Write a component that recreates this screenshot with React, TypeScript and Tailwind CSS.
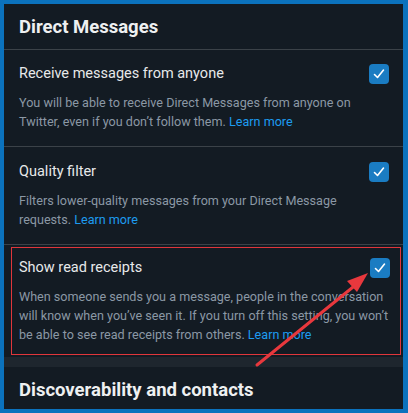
import React from "react";

function Check() {
  return (
    <div className="w-[20px] h-[20px] rounded-[4px] bg-[#1a7cc2] flex items-center justify-center shrink-0">
      <svg width="14" height="14" viewBox="0 0 14 14" fill="none">
        <path d="M2.5 7.5 L5.5 10.5 L11.5 3" stroke="white" strokeWidth="1.6" strokeLinecap="round" strokeLinejoin="round" />
      </svg>
    </div>
  );
}

function Row({ title, tight, children }: { title: string; tight?: boolean; children: React.ReactNode }) {
  return (
    <div className="flex flex-col">
      <div className={tight ? "flex items-center justify-between h-[20px] pr-[1px]" : "flex items-center justify-between h-[20px] pr-[4px]"}>
        <span className="text-[14.5px] leading-[20px] text-[#e7e9ea]">{title}</span>
        <Check />
      </div>
      <p className={tight ? "mt-[9px] text-[12.6px] leading-[19px] text-[#8b98a5] mr-[3px]" : "mt-[9px] text-[12.6px] leading-[19px] text-[#8b98a5]"}>{children}</p>
    </div>
  );
}

const Link = () => <span className="text-[#1d9bf0]">Learn more</span>;

export default function App() {
  return (
    <div
      className="w-[408px] h-[413px] bg-[#0b72bd] pt-[4px] pl-[4px] pr-[5px] pb-[4px] overflow-hidden"
      style={{ fontFamily: "Roboto, 'Noto Sans', sans-serif" }}
    >
      <div className="relative w-full h-full bg-[#131b23] flex flex-col overflow-hidden">
        <div className="h-[45px] flex items-center pl-[15px] pt-[2px]">
          <span className="text-[18.5px] font-bold text-[#eef0f1]">Direct Messages</span>
        </div>
        <div className="h-[1px] bg-[#3b4248]" />
        <div className="pt-[14px] pb-[15px] pl-[15px] pr-[13px]">
          <Row title="Receive messages from anyone" tight>
            You will be able to receive Direct Messages from anyone on Twitter, even if you don’t follow them. <Link />
          </Row>
        </div>
        <div className="h-[1px] bg-[#3b4248]" />
        <div className="pt-[15px] pb-[15px] pl-[15px] pr-[13px]">
          <Row title="Quality filter" tight>
            Filters lower-quality messages from your Direct Message requests. <Link />
          </Row>
        </div>
        <div className="h-[1px] bg-[#3b4248]" />
        <div className="mt-[2px] ml-[7px] mr-[2px] border-[1.5px] border-[#e0363b] pt-[10px] pb-[10px] pl-[7px] pr-[6.5px]">
          <Row title="Show read receipts">
            When someone sends you a message, people in the conversation will know when you’ve seen it. If you turn off this setting, you won’t be able to see read receipts from others. <Link />
          </Row>
        </div>
        <div className="mt-[2px] h-[10px] bg-[#1e262e]" />
        <div className="flex-1 flex items-center pl-[15px] pt-[5px]">
          <span className="text-[18.5px] font-bold text-[#eef0f1]">Discoverability and contacts</span>
        </div>
        <svg className="absolute left-0 top-0 pointer-events-none" width="399" height="405" viewBox="0 0 399 405">
          <line x1="253" y1="361" x2="354" y2="279" stroke="#e8383d" strokeWidth="3" strokeLinecap="round" />
          <polygon points="364,269 343,277 353,288" fill="#e8383d" />
        </svg>
      </div>
    </div>
  );
}
